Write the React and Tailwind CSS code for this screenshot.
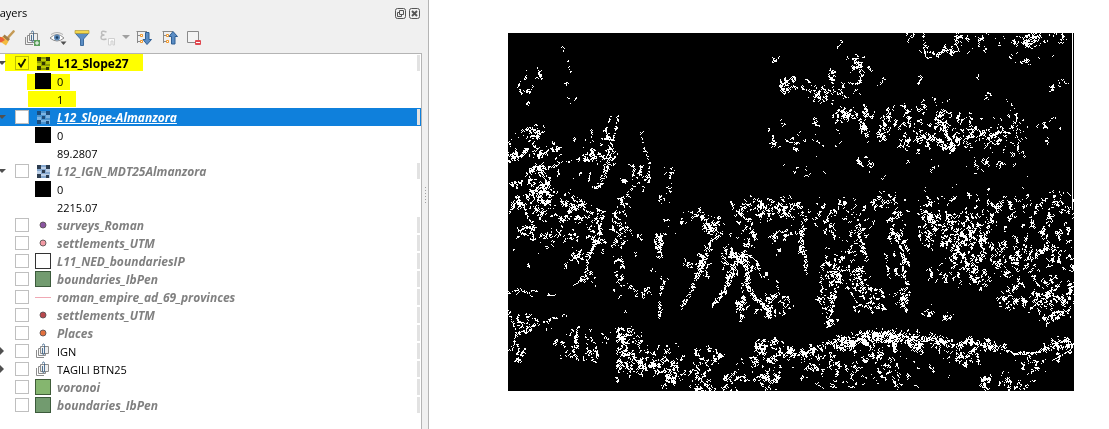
import { useState } from "react";

/* Raster: each patch is [cx, cy, rx, ry, marks]; each ridge is [width, marks per px, x, y, x, y, ...] */
const PATCHES = [
  [24, 36, 8, 7, 14], [30, 44, 6, 4, 5], [18, 54, 6, 4, 12], [22, 73, 10, 2, 4], [62, 70, 4, 1, 3],
  [28, 100, 14, 6, 60], [30, 119, 13, 4, 60], [14, 120, 7, 4, 30], [2, 127, 5, 6, 34], [30, 138, 12, 5, 60],
  [48, 120, 4, 11, 36], [35, 150, 9, 9, 50], [32, 162, 13, 6, 80], [10, 150, 11, 14, 30], [55, 150, 25, 14, 40],
  [85, 124, 8, 7, 50], [99, 112, 9, 16, 60], [75, 105, 9, 8, 14], [128, 143, 16, 10, 60], [160, 152, 4, 16, 16],
  [10, 171, 9, 4, 22], [70, 171, 9, 5, 36], [50, 165, 35, 10, 50], [240, 169, 25, 5, 50], [258, 24, 12, 8, 10],
  [278, 52, 6, 6, 34], [266, 104, 14, 22, 22], [285, 50, 15, 9, 44], [312, 60, 6, 7, 46], [318, 65, 14, 4, 20],
  [325, 42, 5, 6, 26], [338, 58, 20, 8, 26], [350, 34, 7, 9, 36], [345, 25, 8, 2, 14], [366, 35, 8, 4, 6],
  [373, 49, 3, 2, 10], [335, 8, 2, 2, 5], [403, 2, 10, 4, 14], [450, 5, 4, 5, 20], [470, 10, 18, 8, 26],
  [430, 17, 22, 5, 36], [524, 6, 10, 8, 60], [505, 5, 12, 6, 24], [545, 4, 12, 6, 28], [490, 12, 20, 10, 14],
  [530, 24, 30, 10, 16], [548, 48, 12, 14, 24], [400, 46, 12, 6, 8], [480, 52, 20, 14, 12], [430, 66, 12, 5, 8],
  [332, 81, 6, 6, 60], [350, 78, 12, 10, 44], [356, 96, 5, 8, 44], [306, 90, 3, 8, 12], [378, 90, 9, 14, 60],
  [400, 92, 28, 20, 120], [405, 108, 20, 9, 70], [421, 104, 12, 6, 40], [440, 110, 9, 8, 70], [436, 92, 10, 8, 50],
  [434, 80, 9, 6, 26], [455, 96, 12, 20, 70], [490, 97, 28, 16, 120], [500, 110, 32, 20, 60], [472, 128, 6, 7, 28],
  [362, 127, 11, 8, 30], [290, 109, 12, 6, 18], [310, 106, 30, 12, 14], [540, 98, 18, 16, 24], [455, 75, 70, 12, 40],
  [450, 135, 80, 20, 24], [298, 130, 22, 26, 14], [280, 168, 8, 9, 22], [340, 169, 10, 5, 16], [375, 168, 12, 6, 40],
  [430, 165, 45, 9, 40], [500, 166, 45, 11, 70], [556, 166, 10, 10, 22],
  [35, 176, 10, 12, 60], [62, 180, 16, 12, 60], [45, 204, 24, 9, 60], [20, 198, 14, 10, 30], [30, 225, 12, 10, 8],
  [88, 190, 9, 20, 110], [72, 220, 9, 8, 44], [78, 247, 9, 8, 24], [112, 196, 10, 16, 90], [113, 172, 10, 10, 26],
  [112, 236, 6, 13, 44], [115, 262, 12, 16, 26], [152, 180, 6, 14, 18], [152, 211, 6, 12, 44], [150, 240, 10, 14, 12],
  [140, 262, 8, 8, 20], [130, 198, 8, 10, 8], [204, 195, 8, 11, 90], [186, 185, 14, 8, 36], [193, 234, 7, 11, 60],
  [178, 230, 6, 6, 20], [250, 178, 28, 9, 80], [238, 200, 8, 15, 60], [220, 222, 9, 9, 44], [220, 237, 9, 10, 36],
  [230, 225, 8, 6, 50], [232, 274, 6, 12, 44], [270, 192, 12, 24, 70], [272, 270, 10, 14, 44], [258, 268, 14, 10, 50],
  [250, 238, 8, 10, 26], [262, 172, 28, 9, 50], [25, 290, 20, 8, 60], [7, 320, 9, 11, 46], [70, 308, 16, 20, 46],
  [80, 322, 10, 14, 40], [50, 318, 6, 12, 14], [110, 301, 16, 7, 56], [117, 320, 11, 20, 150], [125, 306, 11, 10, 50],
  [138, 324, 9, 11, 90], [133, 336, 6, 9, 36], [158, 335, 8, 9, 74], [161, 346, 5, 9, 50], [172, 335, 6, 10, 44],
  [160, 311, 12, 8, 18], [190, 345, 8, 15, 74], [202, 324, 14, 8, 60], [200, 354, 12, 6, 36], [225, 348, 8, 12, 56],
  [253, 315, 7, 9, 74], [250, 335, 10, 12, 44], [262, 348, 10, 12, 80], [270, 322, 8, 16, 100], [225, 322, 28, 12, 22],
  [285, 178, 14, 8, 46], [310, 176, 60, 9, 50], [318, 202, 14, 28, 60], [350, 192, 14, 12, 50], [345, 215, 12, 20, 50],
  [330, 241, 6, 7, 70], [319, 246, 12, 6, 40], [318, 232, 9, 6, 30], [347, 244, 10, 9, 90], [320, 265, 9, 10, 50],
  [322, 284, 8, 12, 40], [365, 264, 14, 10, 50], [355, 273, 20, 6, 24], [388, 195, 9, 16, 60], [395, 225, 10, 20, 50],
  [395, 268, 8, 14, 36], [417, 196, 9, 18, 110], [435, 191, 17, 11, 110], [450, 202, 16, 22, 240], [468, 210, 14, 36, 200],
  [455, 237, 22, 16, 90], [425, 242, 14, 9, 30], [515, 200, 50, 36, 360], [508, 228, 22, 16, 120], [498, 264, 11, 12, 60],
  [525, 266, 22, 9, 100], [545, 258, 20, 13, 140], [545, 226, 22, 32, 150], [536, 284, 8, 5, 30], [553, 272, 13, 12, 60],
  [490, 247, 24, 12, 60], [420, 278, 9, 5, 18], [438, 281, 5, 9, 20], [430, 176, 140, 12, 130], [550, 288, 16, 10, 26],
  [292, 321, 14, 9, 90], [337, 309, 9, 8, 90], [360, 304, 12, 8, 130], [380, 303, 10, 6, 90], [400, 306, 10, 6, 84],
  [410, 312, 8, 5, 50], [365, 312, 24, 10, 110], [430, 308, 16, 6, 76], [462, 309, 9, 5, 44], [485, 313, 12, 4, 40],
  [550, 311, 15, 6, 84], [300, 332, 20, 14, 64], [325, 332, 10, 24, 70], [365, 328, 16, 12, 70], [380, 345, 18, 14, 60],
  [340, 345, 20, 12, 40], [440, 318, 30, 8, 36], [466, 328, 8, 14, 40], [474, 344, 6, 12, 36], [492, 348, 16, 10, 44],
  [512, 345, 12, 10, 30], [520, 330, 24, 10, 44], [545, 322, 18, 8, 30], [415, 335, 40, 18, 26], [283, 200, 282, 10, 40],
  [283, 345, 282, 14, 50], [100, 200, 100, 40, 30],
];

const RIDGES = [
  [2, 0.3, 55, 15, 58, 25, 62, 38, 57, 54], [2, 0.6, 18, 44, 11, 48, 10, 58, 16, 62],
  [3, 0.6, 0, 112, 8, 100, 20, 95], [3, 0.8, 20, 138, 38, 136, 56, 129, 78, 124, 88, 116],
  [1, 0.6, 103, 82, 98, 95, 94, 106], [1, 0.8, 110, 80, 108, 95, 103, 112], [4, 1.8, 103, 112, 100, 125, 97, 138, 92, 150, 85, 156],
  [1, 0.5, 132, 98, 136, 115, 141, 130, 142, 145, 133, 160], [3, 0.8, 112, 167, 130, 150], [3, 0.8, 275, 53, 303, 58],
  [2, 0.8, 324, 40, 325, 58, 340, 64], [2, 1, 345, 24, 350, 35, 354, 44, 350, 50, 340, 50],
  [1, 1, 415, 0, 416, 10, 420, 17, 427, 21, 438, 17, 450, 18, 447, 8, 449, 2], [3, 2, 518, 14, 532, 0],
  [3, 1.2, 335, 82, 350, 85, 356, 95, 358, 101], [3, 1.5, 430, 88, 442, 91, 435, 98, 445, 113, 438, 116, 430, 103],
  [3, 1.2, 450, 112, 465, 100, 462, 90], [2, 1.4, 465, 92, 480, 105, 492, 98, 503, 100], [1, 1, 277, 106, 282, 109, 291, 110],
  [1, 1, 0, 182, 8, 168, 15, 172, 20, 185, 24, 190, 10, 198], [4, 1.2, 76, 167, 62, 178, 50, 190],
  [3, 1.2, 96, 178, 92, 190, 90, 205, 80, 222, 78, 240, 76, 250], [2, 1.4, 146, 211, 153, 221], [3, 1.5, 152, 201, 153, 223],
  [2, 1.2, 156, 246, 152, 265, 151, 286], [2, 1.2, 180, 178, 195, 185, 204, 196], [4, 1.8, 204, 205, 200, 215, 195, 232, 188, 244, 182, 258, 173, 275],
  [4, 2.8, 233, 220, 228, 230, 222, 245, 216, 258, 205, 272], [4, 3.2, 236, 222, 239, 240, 240, 255, 248, 266, 258, 275, 262, 284],
  [3, 1.3, 235, 250, 234, 265, 232, 284], [1, 0.9, 238, 220, 248, 228, 253, 244], [1, 0.9, 268, 246, 270, 258, 275, 266],
  [1, 1, 0, 260, 8, 257, 15, 258, 24, 262], [1, 1, 22, 257, 30, 258], [1, 1.2, 38, 262, 48, 262],
  [2, 0.9, 0, 277, 5, 290, 8, 302, 4, 315], [3, 0.9, 8, 303, 20, 293, 35, 290, 45, 285, 58, 282],
  [2, 1, 71, 292, 66, 305, 65, 318, 70, 327], [4, 2.5, 294, 190, 293, 218], [3, 1.8, 290, 218, 297, 222, 298, 240],
  [3, 1.2, 353, 190, 352, 205, 358, 227], [3, 1.2, 330, 248, 325, 265, 322, 280, 319, 297],
  [2, 1.1, 340, 254, 352, 257, 362, 255, 374, 258, 375, 266], [1, 0.9, 342, 258, 350, 272, 372, 275],
  [3, 1.4, 383, 184, 385, 200, 393, 215, 395, 235, 398, 255, 393, 272, 400, 278], [2, 1.2, 388, 200, 402, 220],
  [2, 1, 378, 222, 380, 245], [2, 1.4, 470, 190, 474, 215], [2, 1, 448, 318, 453, 329],
  [5, 1.5, 282, 318, 297, 320, 315, 312, 330, 305, 345, 310, 360, 303, 378, 301, 396, 304, 412, 311],
  [4, 1.7, 412, 305, 425, 305, 445, 312, 460, 307, 480, 313, 495, 316], [3, 1.6, 495, 316, 505, 320, 525, 320, 540, 315, 566, 311],
];

const MAP_W = 566;
const MAP_H = 358;

function rasterPath() {
  let seed = 20270;
  const rand = () => {
    seed = (seed * 1664525 + 1013904223) % 4294967296;
    return seed / 4294967296;
  };
  const grid = new Uint8Array(MAP_W * MAP_H);
  const mark = (x0, y0, reach) => {
    let x = Math.round(x0);
    let y = Math.round(y0);
    const steps = 1 + Math.floor(rand() * rand() * reach);
    for (let i = 0; i < steps; i++) {
      if (x >= 0 && y >= 0 && x < MAP_W && y < MAP_H) grid[y * MAP_W + x] = 1;
      x += Math.floor(rand() * 3) - 1;
      y += Math.floor(rand() * 3) - 1;
    }
  };
  const spread = () => rand() + rand() + rand() - 1.5;
  for (const [cx, cy, rx, ry, n] of PATCHES) {
    let left = n;
    while (left > 0) {
      const a = rand() * Math.PI * 2;
      const r = Math.pow(rand(), 0.6) * 1.1;
      const px = cx + Math.cos(a) * rx * r;
      const py = cy + Math.sin(a) * ry * r;
      const family = Math.min(left, 1 + Math.floor(rand() * rand() * 14));
      const slant = spread() * 2;
      for (let k = 0; k < family; k++) {
        const along = spread() * 2.6;
        mark(px + along * slant + spread(), py + along * 1.3 + spread(), 7);
      }
      left -= family;
    }
  }
  for (const [w, density, ...p] of RIDGES) {
    for (let i = 0; i + 3 < p.length; i += 2) {
      const dx = p[i + 2] - p[i];
      const dy = p[i + 3] - p[i + 1];
      const n = Math.round(Math.hypot(dx, dy) * density);
      for (let k = 0; k < n; k++) {
        const t = rand();
        mark(p[i] + dx * t + (rand() - 0.5) * w, p[i + 1] + dy * t + (rand() - 0.5) * w, 5);
      }
    }
  }
  let d = "M564 0h1v177h-1z";
  for (let y = 0; y < MAP_H; y++) {
    for (let x = 0; x < MAP_W; x++) {
      if (!grid[y * MAP_W + x]) continue;
      let e = x + 1;
      while (e < MAP_W && grid[y * MAP_W + e]) e++;
      d += `M${x} ${y}h${e - x}v1h${x - e}z`;
      x = e;
    }
  }
  return d;
}

const SLOPE_PATH = rasterPath();

function SlopeMap() {
  return (
    <svg viewBox="0 0 566 358" className="block h-auto w-full bg-black" shapeRendering="crispEdges" role="img" aria-label="Slope raster">
      <path d={SLOPE_PATH} fill="#fff" />
    </svg>
  );
}

function Checker({ dark, mid, light }) {
  return (
    <svg viewBox="0 0 13 13" className="h-[13px] w-[13px]" shapeRendering="crispEdges" aria-hidden="true">
      <rect width="13" height="13" fill={light} />
      <path d="M4 0h5v2H4zM0 4h4v2H0zM4 4h5v5H4zM9 7h4v2H9zM4 11h5v2H4z" fill={mid} />
      <path d="M0 0h4v4H0zM9 0h4v4H9zM5 5h3v3H5zM0 9h4v4H0zM9 10h3v3H9z" fill={dark} />
    </svg>
  );
}

function GroupIcon({ plus }) {
  return (
    <svg viewBox="0 0 16 16" className="h-4 w-4" fill="none" aria-hidden="true">
      <path d="M1.500 7v7.500H9" stroke="#8c8c8c" />
      <path d="M3.500 5.500h7v7h-7z" fill="#f8f8f8" stroke="#8c8c8c" />
      <path d="M5.500 3.500h8v7h-8z" fill="#efefef" stroke="#8c8c8c" />
      <path d="M7.500 5v5.500q0 1 1 1t1-1v-8q0-1.500-1-1.500t-1 1.500" stroke="#3c6288" strokeWidth="0.900" />
      {plus && <path d="M10 10h6v6h-6z" fill="#5a9e5c" />}
      {plus && <path d="M13 11v4M11 13h4" stroke="#fff" />}
    </svg>
  );
}

const Swatch = ({ fill, stroke }) => (
  <svg viewBox="0 0 16 16" className="h-4 w-4" shapeRendering="crispEdges" aria-hidden="true">
    <rect x="0.5" y="0.5" width="15" height="15" fill={fill} stroke={stroke} />
  </svg>
);

const Dot = ({ fill }) => (
  <svg viewBox="0 0 16 16" className="h-4 w-4" aria-hidden="true">
    <circle cx="8" cy="8" r="3" fill={fill} stroke="#5c5456" strokeWidth="0.9" />
  </svg>
);

const Line = () => (
  <svg viewBox="0 0 16 16" className="h-4 w-4" shapeRendering="crispEdges" aria-hidden="true">
    <path d="M0 8h16v1H0z" fill="#f0a8b4" />
  </svg>
);

const black = <Swatch fill="#000" stroke="#000" />;

const ROWS = [
  { name: "L12_Slope27", arrow: "open", on: true, tone: "bold", icon: <Checker dark="#30363c" mid="#8d9a93" light="#bccbd8" />, mark: "left-[5px] w-[138px] top-0 h-[17px]" },
  { value: "0", icon: black, mark: "left-[27px] w-[43px] top-[2px] h-4" },
  { value: "1", mark: "left-[28px] w-[48px] top-[1px] h-4" },
  { name: "L12_Slope-Almanzora", arrow: "open", tone: "selected", icon: <Checker dark="#1c4c7c" mid="#4a93cf" light="#7cb4e4" /> },
  { value: "0", icon: black },
  { value: "89.2807" },
  { name: "L12_IGN_MDT25Almanzora", arrow: "open", tone: "off", icon: <Checker dark="#2c3c50" mid="#86a8d0" light="#bcd0e8" /> },
  { value: "0", icon: black },
  { value: "2215.07" },
  { name: "surveys_Roman", tone: "off", icon: <Dot fill="#8a55a0" /> },
  { name: "settlements_UTM", tone: "off", icon: <Dot fill="#f29aa4" /> },
  { name: "L11_NED_boundariesIP", tone: "off", icon: <Swatch fill="#fff" stroke="#333" /> },
  { name: "boundaries_IbPen", tone: "off", icon: <Swatch fill="#729b6f" stroke="#3b5a3b" /> },
  { name: "roman_empire_ad_69_provinces", tone: "off", icon: <Line /> },
  { name: "settlements_UTM", tone: "off", icon: <Dot fill="#b8484c" /> },
  { name: "Places", tone: "off", icon: <Dot fill="#e2703e" /> },
  { name: "IGN", arrow: "closed", tone: "group", icon: <GroupIcon /> },
  { name: "TAGILI BTN25", arrow: "closed", tone: "group", icon: <GroupIcon /> },
  { name: "voronoi", tone: "off", icon: <Swatch fill="#85b66f" stroke="#3f5c38" /> },
  { name: "boundaries_IbPen", tone: "off", icon: <Swatch fill="#729b6f" stroke="#3b5a3b" /> },
];

const TONES = {
  bold: "text-xs font-bold text-black",
  selected: "text-xs font-bold italic text-white underline",
  off: "text-xs font-bold italic text-[#808080]",
  group: "text-[11px] text-black",
};

function Arrow({ kind }) {
  if (!kind) return null;
  return (
    <svg viewBox="0 0 8 8" className="h-2 w-2" aria-hidden="true">
      <path d={kind === "open" ? "M0 2h8L4 6z" : "M2 0l4 4-4 4z"} fill="#505050" />
    </svg>
  );
}

function Row({ row, id }) {
  const [on, setOn] = useState(Boolean(row.on));
  const layer = Boolean(row.name);
  return (
    <li className={`relative flex h-[18px] items-center ${row.tone === "selected" ? "bg-[#0f80dc]" : ""}`}>
      <span className="-ml-0.5 flex w-[17px] shrink-0 items-center">
        <Arrow kind={row.arrow} />
      </span>
      <span className="relative flex w-5 shrink-0 items-center">
        {layer && (
          <>
            <input
              id={id}
              type="checkbox"
              checked={on}
              onChange={() => setOn(!on)}
              className="h-3.5 w-3.5 appearance-none border border-[#bfbfbf] bg-white"
            />
            {on && (
              <svg viewBox="0 0 14 14" className="pointer-events-none absolute left-0 h-3.5 w-3.5" fill="none" aria-hidden="true">
                <path d="M3.500 7l2.500 3.500L10.500 3" stroke="#111" strokeWidth="1.800" />
              </svg>
            )}
          </>
        )}
      </span>
      <span className="flex w-[22px] shrink-0 items-center">
        <span className="flex w-4 justify-center">{row.icon}</span>
      </span>
      {layer ? (
        <label htmlFor={id} className={`grow whitespace-nowrap pt-0.5 leading-4 ${TONES[row.tone]}`}>
          {row.name}
        </label>
      ) : (
        <span className="grow pt-0.5 text-[11px] leading-4 text-black">{row.value}</span>
      )}
      {layer && <span className="mr-px h-4 w-[3px] bg-[#e2e2e2]" />}
      {row.mark && <span className={`pointer-events-none absolute bg-[#ffff00] mix-blend-multiply ${row.mark}`} />}
    </li>
  );
}

function ToolButton({ label, className, children }) {
  return (
    <button type="button" aria-label={label} className={`flex h-5 shrink-0 items-center justify-center ${className}`}>
      {children}
    </button>
  );
}

function TreeIcon({ up }) {
  return (
    <svg viewBox="0 0 16 16" className="h-4 w-4" fill="none" aria-hidden="true">
      <path d="M.5 1.500H11M1.500 2v11M1.500 5.500H4M1.500 11.500H4" stroke="#8a8a8a" />
      <path d="M4.500 4.500h2v2h-2zM4.500 10.500h2v2h-2z" fill="#fff" stroke="#f0982c" />
      <path
        d={up ? "M11 1.500l4.500 5H13V14H9.500V6.500H7z" : "M11 14.500l4.500-5H13V2.500H9.500v7H7z"}
        fill="#5b8dc4"
        stroke="#2f5f94"
      />
    </svg>
  );
}

function Toolbar() {
  return (
    <div className="flex h-[31px] items-center">
      <ToolButton label="Open layer styling" className="-ml-1 w-5">
        <svg viewBox="0 0 18 16" className="h-4 w-[18px] shrink-0" aria-hidden="true">
          <path d="M16.500 1.500L11.500 7" stroke="#c49a55" strokeWidth="2.600" strokeLinecap="round" />
          <path d="M7.500 4.500L13 9l-2 2.500L5.500 7z" fill="#a07c48" />
          <path d="M5.500 6.500l6 5L9 15.500 1 10z" fill="#f4bc40" />
          <path d="M0 6l5.500 1.500L8 10l-4 2.500-4-1z" fill="#e8603a" />
        </svg>
      </ToolButton>
      <ToolButton label="Add group" className="ml-2 w-4"><GroupIcon plus /></ToolButton>
      <ToolButton label="Manage map themes" className="ml-2.5 w-4">
        <svg viewBox="0 0 18 16" className="h-4 w-[18px] shrink-0" fill="none" aria-hidden="true">
          <path d="M1 8q7-7 14 0-7 6-14 0z" fill="#fff" stroke="#8a8a8a" />
          <path d="M2 4.500q6-4 12 0" stroke="#b0b0b0" />
          <circle cx="8" cy="7.500" r="3" fill="#5b87b5" />
          <circle cx="8" cy="7.500" r="1.300" fill="#1c3c5c" />
          <path d="M11.500 11.500h6L14.500 15z" fill="#505050" />
        </svg>
      </ToolButton>
      <ToolButton label="Filter legend" className="ml-2 w-4">
        <svg viewBox="0 0 16 16" className="h-4 w-4" aria-hidden="true">
          <path d="M1.500 3.500h13L9.500 9v6.500h-3V9z" fill="#5b8dc4" stroke="#3d6c9e" />
          <path d="M1 .5h14v3H1z" fill="#f4d84c" stroke="#b09a3c" strokeWidth="0.700" />
        </svg>
      </ToolButton>
      <ToolButton label="Filter legend by expression" className="ml-2.5 w-4">
        <svg viewBox="0 0 16 16" className="h-4 w-4" fill="none" aria-hidden="true">
          <path d="M6.500 2Q1.500 0 1.500 3 1.500 5 4.500 5 1 5 1 7.500q0 3 5.500 1.500" stroke="#bcbcbc" strokeWidth="1.400" />
          <path d="M8.500 8.500h6V15H13v-4h-2v4H8.500z" fill="#fafafa" stroke="#d0d0d0" />
        </svg>
      </ToolButton>
      <ToolButton label="Expression options" className="ml-1 w-3">
        <svg viewBox="0 0 8 5" className="h-[5px] w-2" aria-hidden="true"><path d="M0 0h8L4 4z" fill="#a0a0a0" /></svg>
      </ToolButton>
      <ToolButton label="Expand all" className="ml-1 w-4"><TreeIcon /></ToolButton>
      <ToolButton label="Collapse all" className="ml-2.5 w-4"><TreeIcon up /></ToolButton>
      <ToolButton label="Remove layer" className="ml-2 w-4">
        <svg viewBox="0 0 16 16" className="h-4 w-4" fill="none" aria-hidden="true">
          <path d="M1.500 1.500h11v11h-11z" fill="#f4f4f4" stroke="#8a8a8a" />
          <rect x="9" y="10" width="6" height="5" rx="1" fill="#e04850" />
          <path d="M10 12.500h4" stroke="#fff" />
        </svg>
      </ToolButton>
    </div>
  );
}

export default function App() {
  return (
    <div className="flex min-h-screen bg-white font-['Open_Sans','Noto_Sans',sans-serif]">
      <aside className="flex w-[429px] shrink-0 overflow-hidden border-r border-[#b4b4b4] bg-[#f0f0f0]">
        <div className="flex min-w-0 grow flex-col">
          <header className="flex h-[22px] items-center justify-between pt-1 pr-0.5">
            <h1 className="-ml-1.5 text-[11px] leading-4 text-black">Layers</h1>
            <span className="flex gap-[3px]">
              <button type="button" aria-label="Float panel" className="h-[11px] w-[11px]">
                <svg viewBox="0 0 11 11" className="h-[11px] w-[11px]" fill="none" aria-hidden="true">
                  <rect x="0.5" y="0.5" width="10" height="10" rx="2" stroke="#555" />
                  <path d="M4.500 2.500h4v4h-4zM4 4.500H2.500v4h4V7" stroke="#555" />
                </svg>
              </button>
              <button type="button" aria-label="Close panel" className="h-[11px] w-[11px]">
                <svg viewBox="0 0 11 11" className="h-[11px] w-[11px]" fill="none" aria-hidden="true">
                  <rect x="0.5" y="0.5" width="10" height="10" rx="2" stroke="#555" />
                  <path d="M3 3l5 5M8 3L3 8" stroke="#555" strokeWidth="1.900" />
                </svg>
              </button>
            </span>
          </header>
          <Toolbar />
          <ul className="grow border-t border-r border-[#b4b4b4] bg-white">
            {ROWS.map((row, i) => (
              <Row key={i} row={row} id={`layer-${i}`} />
            ))}
          </ul>
        </div>
        <div className="flex w-1.5 shrink-0 flex-col items-center justify-center gap-0.5 pb-10" aria-hidden="true">
          {[0, 1, 2, 3, 4, 5].map((n) => (
            <span key={n} className="h-px w-px bg-[#a0a0a0]" />
          ))}
        </div>
      </aside>
      <main className="min-w-0 grow pt-[33px] pr-[35px] pl-[79px]">
        <SlopeMap />
      </main>
    </div>
  );
}
